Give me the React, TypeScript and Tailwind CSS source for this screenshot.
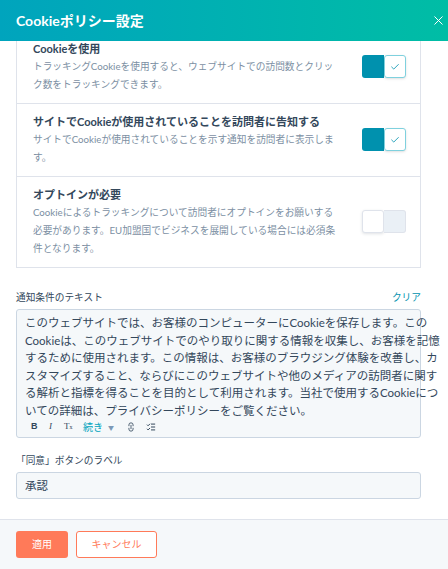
import { X, Check, Link2, ListChecks } from "lucide-react";

const font = { fontFamily: 'Lato, "Noto Sans CJK JP", sans-serif' };

function Toggle({ on }: { on: boolean }) {
  if (on) {
    return (
      <div className="flex h-[23px] w-[44px] shrink-0">
        <div className="w-[22px] rounded-l-[3px] bg-[#0091ae]" />
        <div className="flex w-[22px] items-center justify-center rounded-[3px] border border-[#7fd1de] bg-white shadow-sm">
          <Check className="h-[10px] w-[10px] text-[#0091ae]" strokeWidth={2} />
        </div>
      </div>
    );
  }
  return (
    <div className="flex h-[23px] w-[44px] shrink-0">
      <div className="w-[22px] rounded-[3px] border border-[#dfe3eb] bg-white shadow-[0_1px_3px_rgba(45,62,80,0.15)]" />
      <div className="w-[22px] rounded-r-[3px] border border-l-0 border-[#dfe3eb] bg-[#eaf0f6]" />
    </div>
  );
}

type Row = { title: string; lines: string[]; on: boolean };

const rows: Row[] = [
  {
    title: "Cookieを使用",
    lines: ["トラッキングCookieを使用すると、ウェブサイトでの訪問数とクリッ", "ク数をトラッキングできます。"],
    on: true,
  },
  {
    title: "サイトでCookieが使用されていることを訪問者に告知する",
    lines: ["サイトでCookieが使用されていることを示す通知を訪問者に表示しま", "す。"],
    on: true,
  },
  {
    title: "オプトインが必要",
    lines: [
      "Cookieによるトラッキングについて訪問者にオプトインをお願いする",
      "必要があります。EU加盟国でビジネスを展開している場合には必須条",
      "件となります。",
    ],
    on: false,
  },
];

const bodyLines = [
  "このウェブサイトでは、お客様のコンピューターにCookieを保存します。この",
  "Cookieは、このウェブサイトでのやり取りに関する情報を収集し、お客様を記憶",
  "するために使用されます。この情報は、お客様のブラウジング体験を改善し、カ",
  "スタマイズすること、ならびにこのウェブサイトや他のメディアの訪問者に関す",
  "る解析と指標を得ることを目的として利用されます。当社で使用するCookieにつ",
  "いての詳細は、プライバシーポリシーをご覧ください。",
];

export default function App() {
  return (
    <div className="flex h-[569px] w-[448px] flex-col overflow-hidden bg-white text-[#33475b]" style={font}>
      {/* header */}
      <div className="flex h-[41px] shrink-0 items-center justify-between bg-gradient-to-r from-[#00a4bd] to-[#00bda5] pl-4 pr-[2px]">
        <h1 className="text-[14px] font-bold text-white">Cookieポリシー設定</h1>
        <X className="h-[15px] w-[15px] text-white" strokeWidth={1.6} />
      </div>

      {/* body */}
      <div className="flex-1 overflow-hidden pl-4 pr-[27px]">
        <div className="-mt-[10px] border-x border-b border-[#dfe3eb]">
          {rows.map((row, i) => (
            <div
              key={i}
              className={`flex items-center justify-between pb-[10px] pl-4 pr-[14px] pt-[9px] ${i > 0 ? "border-t border-[#dfe3eb]" : ""}`}
            >
              <div>
                <div className="text-[11px] font-bold leading-[17px]">{row.title}</div>
                <div className="text-[9.7px] leading-[18px] text-[#7c8fa3]">
                  {row.lines.map((l, j) => (
                    <div key={j} className="whitespace-nowrap">{l}</div>
                  ))}
                </div>
              </div>
              <Toggle on={row.on} />
            </div>
          ))}
        </div>

        <div className="mt-[20px] flex items-center justify-between text-[9.7px] leading-[18px]">
          <span>通知条件のテキスト</span>
          <span className="text-[#0091ae]">クリア</span>
        </div>
        <div className="mt-[3px] rounded-[3px] border border-[#cbd6e2] bg-[#f5f8fa] px-2 pb-[3px] pt-[4px]">
          <div className="text-[11.5px] leading-[17.5px]">
            {bodyLines.map((l, j) => (
              <div key={j} className="whitespace-nowrap">{l}</div>
            ))}
          </div>
          <div className="mt-[1px] flex h-[14px] items-center pl-[6px] text-[9px] text-[#33475b]">
            <span className="w-[18px] font-bold" style={{ fontFamily: "Arial, sans-serif" }}>B</span>
            <span className="w-[15px] italic" style={{ fontFamily: '"Liberation Serif", serif' }}>I</span>
            <span className="w-[19px]" style={{ fontFamily: '"Liberation Serif", serif' }}>
              T<span className="text-[6px]">x</span>
            </span>
            <span className="flex w-[43px] items-center gap-[5px] text-[10px] text-[#00a4bd]">
              続き<span className="text-[6px] text-[#7c98b6]">▼</span>
            </span>
            <Link2 className="mr-[10px] h-[10px] w-[10px] rotate-90" strokeWidth={2} />
            <ListChecks className="h-[10px] w-[10px]" strokeWidth={2.4} />
          </div>
        </div>

        <div className="mt-[13px] text-[9.7px] leading-[18px]">「同意」ボタンのラベル</div>
        <div className="mt-[3px] flex h-[27px] items-center rounded-[3px] border border-[#cbd6e2] bg-[#f5f8fa] px-2 text-[11.5px]">
          承認
        </div>
      </div>

      {/* footer */}
      <div className="flex h-[50px] shrink-0 items-center gap-2 border-t border-[#dfe3eb] bg-[#f5f8fa] px-4">
        <button className="h-[27px] w-[52px] rounded-[3px] bg-[#ff7a59] text-[10px] text-white">適用</button>
        <button className="h-[27px] w-[81px] rounded-[3px] border border-[#ff7a59] bg-white text-[10px] text-[#ff7a59]">
          キャンセル
        </button>
      </div>
    </div>
  );
}
